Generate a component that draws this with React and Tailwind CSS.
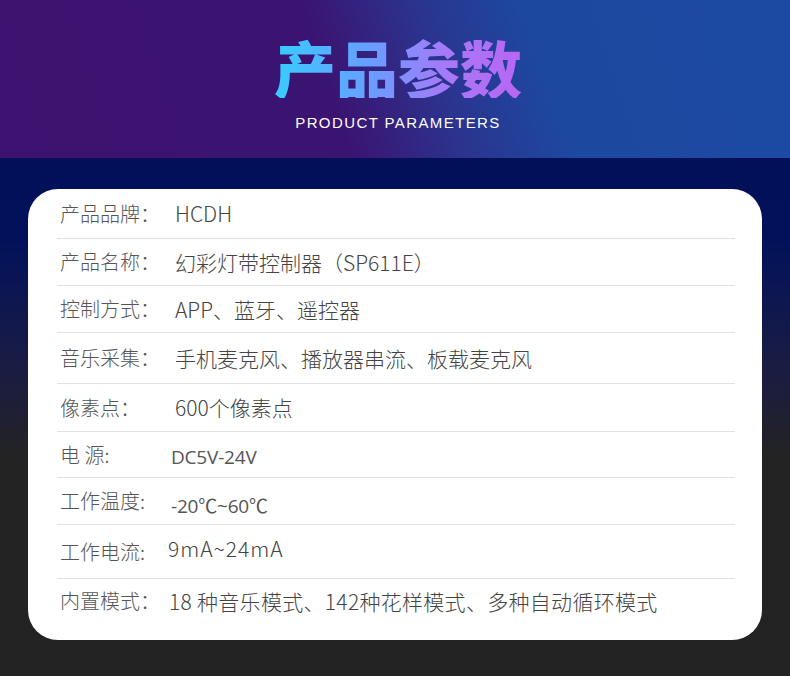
import React from "react";

const rows = [
  { label: "产品品牌：", value: "HCDH", h: "h-[50px]" },
  { label: "产品名称：", value: "幻彩灯带控制器（SP611E）", h: "h-[47px]" },
  { label: "控制方式：", value: "APP、蓝牙、遥控器", h: "h-[47px]" },
  { label: "音乐采集：", value: "手机麦克风、播放器串流、板载麦克风", h: "h-[51px]" },
  { label: "像素点：", value: "600个像素点", h: "h-[48px]" },
  { label: "电 源:", value: "DC5V-24V", h: "h-[46px]", small: true, shift: "mt-[6px]" },
  { label: "工作温度:", value: "-20℃~60℃", h: "h-[47px]", small: true, shift: "mt-[10px]" },
  { label: "工作电流:", value: "9mA~24mA", h: "h-[54px]", shift: "mb-[6px]", wide: true },
  { label: "内置模式：", value: "18 种音乐模式、142种花样模式、多种自动循环模式", h: "h-[61px] pb-[17px]", last: true },
];

function Row({ row }) {
  return (
    <div
      className={`flex items-center px-[3px] ${row.h} ${
        row.last ? "" : "border-b border-[#e2e2e2]"
      }`}
    >
      <span className="w-[115px] shrink-0 text-[20px] leading-none font-light text-[#555555]">
        {row.label}
      </span>
      <span
        className={`${row.shift || ""} ${
          row.small
            ? "text-[19px] font-['Open_Sans','Noto_Sans_CJK_SC',sans-serif] text-[#555555] -ml-[4px] tracking-[-0.2px]"
            : "text-[21px] font-light text-[#444444]"
        } ${row.wide ? "tracking-[1px] -ml-[7px]" : ""} ${
          row.last ? "-ml-[6px] tracking-[0.3px]" : ""
        } leading-none whitespace-nowrap`}
      >
        {row.value}
      </span>
    </div>
  );
}

export default function App() {
  return (
    <div className="w-[790px] h-[676px] overflow-hidden font-['Noto_Sans_CJK_SC','Noto_Sans',sans-serif]">
      <header className="h-[158px] flex flex-col items-center pt-[36px] pl-[6px] bg-[linear-gradient(72deg,#3d1270_0%,#3b1471_42%,#2a3590_56%,#1d489f_68%,#1c4aa3_100%)]">
        <h1 className="text-[62px] leading-none font-black bg-[linear-gradient(90deg,#38ccff_0%,#6a9cff_40%,#a878f7_70%,#b866f3_100%)] bg-clip-text text-transparent">
          产品参数
        </h1>
        <p className="mt-[17px] text-[15px] leading-none tracking-[1.4px] text-white font-['Liberation_Sans',sans-serif]">
          PRODUCT PARAMETERS
        </p>
      </header>
      <main className="h-[518px] pt-[31px] px-[28px] bg-[linear-gradient(180deg,#011058_0%,#02125a_16%,#1a1c44_40%,#232323_58%,#232323_100%)]">
        <section className="bg-white rounded-[30px] pl-[29px] pr-[27px]">
          {rows.map((row, i) => (
            <Row key={i} row={row} />
          ))}
        </section>
      </main>
    </div>
  );
}
